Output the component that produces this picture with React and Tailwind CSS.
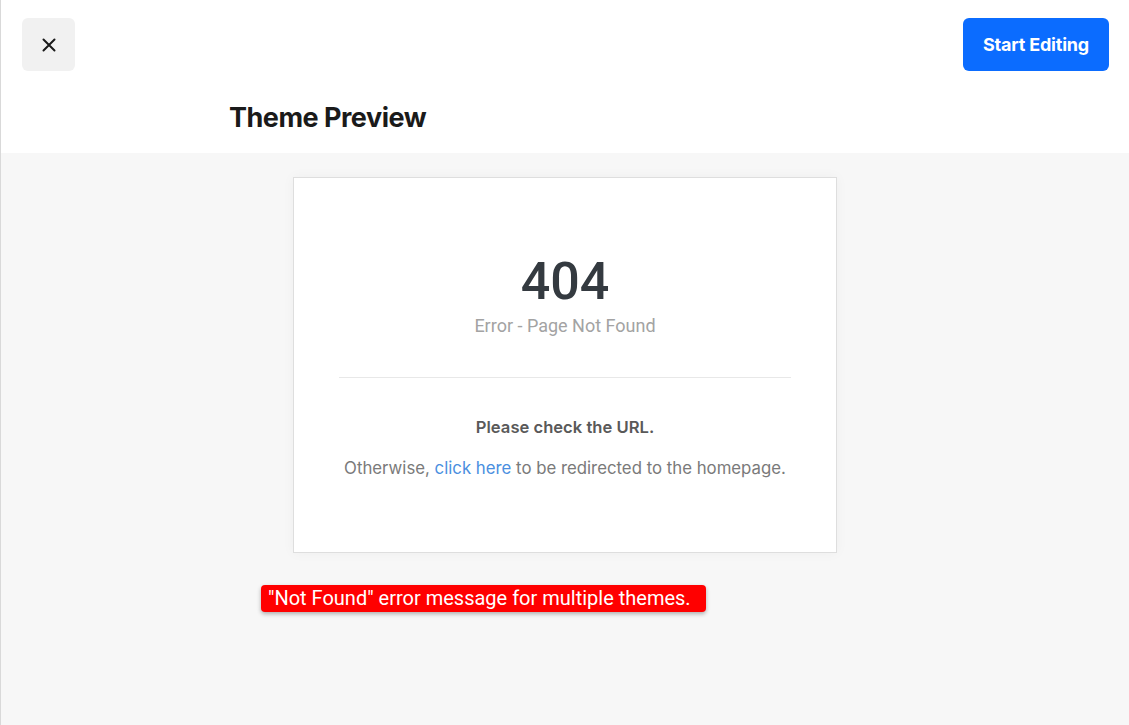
import React from 'react';

const App = () => {
  return (
    <div className="w-[1129px] h-[725px] flex flex-col bg-[#f7f7f7] border-l border-[#d9d9d9] overflow-hidden" style={{ fontFamily: 'Inter, "Liberation Sans", sans-serif' }}>
      <header className="bg-white h-[153px] shrink-0 flex flex-col">
        <div className="flex items-start justify-between pt-[18px] pl-[21px] pr-[20px]">
          <button className="w-[53px] h-[53px] rounded-[6px] bg-[#f1f1f1] flex items-center justify-center text-[#1a1a1a]">
            <svg width="16" height="16" viewBox="0 0 16 16" fill="none" stroke="currentColor" strokeWidth="2" strokeLinecap="round">
              <path d="M2.5 2.5 L13.5 13.5 M13.5 2.5 L2.5 13.5" />
            </svg>
          </button>
          <button className="w-[146px] h-[53px] rounded-[6px] bg-[#0b6cff] text-white text-[18px] font-bold tracking-[-0.2px]">
            Start Editing
          </button>
        </div>
        <h1 className="ml-[228px] mt-[31px] text-[27px] leading-[32px] font-bold text-[#1a1a1a] tracking-[-0.5px]">
          Theme Preview
        </h1>
      </header>

      <main className="flex-1 flex flex-col">
        <div className="ml-[292px] mt-[24px] w-[544px] h-[376px] bg-white border border-[#dedede] shadow-[0_0_12px_rgba(0,0,0,0.04)] flex flex-col items-center">
          <div className="mt-[76px] text-[52px] leading-[56px] font-medium text-[#343a40]" style={{ fontFamily: 'Roboto, "Open Sans", sans-serif' }}>
            404
          </div>
          <div className="mt-[4px] text-[18px] leading-[24px] text-[#a3a3a3]" style={{ fontFamily: 'Roboto, "Open Sans", sans-serif' }}>
            Error - Page Not Found
          </div>
          <div className="mt-[39px] w-[452px] h-px bg-[#e8e8e8]" />
          <div className="mt-[38px] text-[16.6px] leading-[22px] font-semibold text-[#595959]">
            Please check the URL.
          </div>
          <div className="mt-[19px] text-[16.8px] leading-[22px] text-[#7a7a7a]">
            Otherwise, <span className="text-[#4a8fe0]">click here</span> to be redirected to the homepage.
          </div>
        </div>

        <div className="ml-[260px] mt-[32px] self-start h-[27px] pl-[7px] pr-[15px] rounded-[4px] bg-[#ff0000] text-white text-[20px] leading-[27px] shadow-[0_2px_4px_rgba(0,0,0,0.3)]" style={{ fontFamily: 'Roboto, "Liberation Sans", sans-serif' }}>
          "Not Found" error message for multiple themes.
        </div>
      </main>
    </div>
  );
};

export default App;
